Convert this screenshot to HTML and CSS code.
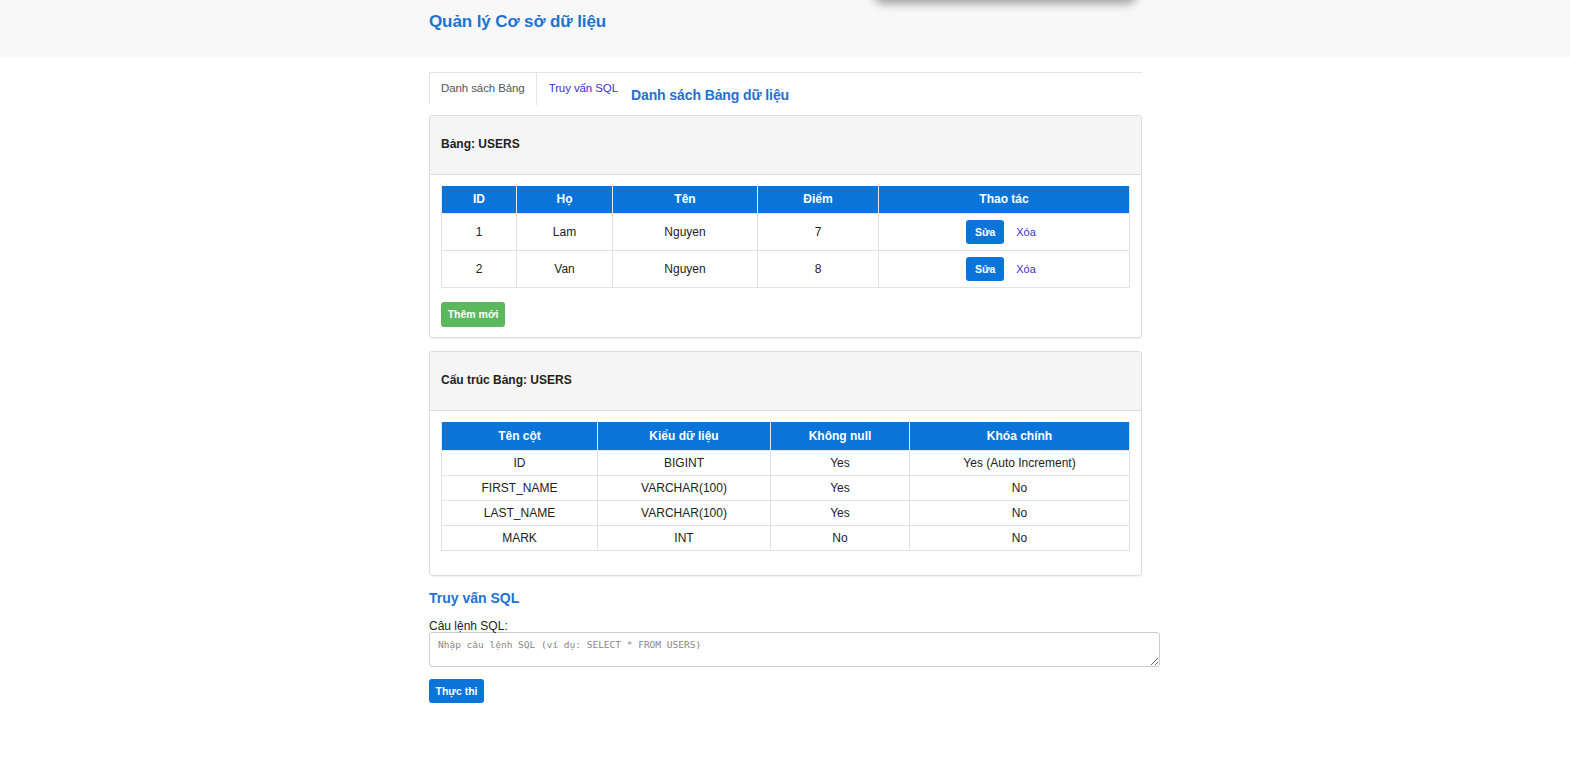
FILE: index.html
```html
<!DOCTYPE html>
<html lang="vi">
<head>
<meta charset="utf-8">
<title>Quản lý Cơ sở dữ liệu</title>
<link rel="stylesheet" href="styles.css">
</head>
<body>
<header class="topbar">
  <div class="container">
    <h1 class="brand">Quản lý Cơ sở dữ liệu</h1>
  </div>
  <div class="ghost-shadow"></div>
</header>
<main class="container">
  <div class="tabs">
    <span class="tab active">Danh sách Bảng</span>
    <a class="tab link" href="#sql">Truy vấn SQL</a>
    <h2 class="tab-title">Danh sách Bảng dữ liệu</h2>
  </div>

  <section class="panel">
    <div class="panel-head">Bảng: USERS</div>
    <div class="panel-body">
      <table class="grid data">
        <colgroup>
          <col style="width:75px"><col style="width:96px"><col style="width:145px"><col style="width:121px"><col>
        </colgroup>
        <thead>
          <tr><th>ID</th><th>Họ</th><th>Tên</th><th>Điểm</th><th>Thao tác</th></tr>
        </thead>
        <tbody>
          <tr><td>1</td><td>Lam</td><td>Nguyen</td><td>7</td><td class="actions"><button class="btn btn-blue">Sửa</button><a class="del" href="#">Xóa</a></td></tr>
          <tr><td>2</td><td>Van</td><td>Nguyen</td><td>8</td><td class="actions"><button class="btn btn-blue">Sửa</button><a class="del" href="#">Xóa</a></td></tr>
        </tbody>
      </table>
      <button class="btn btn-green">Thêm mới</button>
    </div>
  </section>

  <section class="panel">
    <div class="panel-head">Cấu trúc Bảng: USERS</div>
    <div class="panel-body pb-wide">
      <table class="grid struct">
        <colgroup>
          <col style="width:156px"><col style="width:173px"><col style="width:139px"><col>
        </colgroup>
        <thead>
          <tr><th>Tên cột</th><th>Kiểu dữ liệu</th><th>Không null</th><th>Khóa chính</th></tr>
        </thead>
        <tbody>
          <tr><td>ID</td><td>BIGINT</td><td>Yes</td><td>Yes (Auto Increment)</td></tr>
          <tr><td>FIRST_NAME</td><td>VARCHAR(100)</td><td>Yes</td><td>No</td></tr>
          <tr><td>LAST_NAME</td><td>VARCHAR(100)</td><td>Yes</td><td>No</td></tr>
          <tr><td>MARK</td><td>INT</td><td>No</td><td>No</td></tr>
        </tbody>
      </table>
    </div>
  </section>

  <section class="sql" id="sql">
    <h2 class="sql-title">Truy vấn SQL</h2>
    <label class="sql-label" for="q">Câu lệnh SQL:</label>
    <textarea id="q" class="sql-input" placeholder="Nhập câu lệnh SQL (ví dụ: SELECT * FROM USERS)"></textarea>
    <button class="btn btn-blue btn-run">Thực thi</button>
  </section>
</main>
</body>
</html>
```

FILE: styles.css
```css
* { box-sizing: border-box; }
html, body { margin: 0; padding: 0; }
body {
  font-family: "Liberation Sans", Arial, sans-serif;
  color: #222;
  background: #fff;
  font-size: 12px;
}
.container {
  width: 713px;
  margin-left: 429px;
}
.topbar {
  position: relative;
  background: #f8f8f8;
  height: 57px;
  overflow: hidden;
}
.brand {
  margin: 0;
  padding-top: 11px;
  font-size: 17px;
  font-weight: bold;
  color: #1e72d0;
  line-height: 22px;
  letter-spacing: -0.1px;
}
.ghost-shadow {
  position: absolute;
  left: 873px;
  top: -30px;
  width: 265px;
  height: 30px;
  background: #f8f8f8;
  border-radius: 12px;
  box-shadow: 0 4px 10px rgba(0,0,0,0.35);
}
.tabs {
  margin-top: 15px;
  border-top: 1px solid #e4e4e4;
  display: flex;
  align-items: flex-start;
  height: 33px;
}
.tab {
  font-size: 11.5px;
  line-height: 14px;
  padding: 8px 12px 10px 12px;
  text-decoration: none;
  letter-spacing: -0.1px;
}
.tab.active {
  color: #555;
  border-left: 1px solid #e4e4e4;
  border-right: 1px solid #e4e4e4;
  height: 32px;
  padding-left: 11px;
  padding-right: 11px;
}
.tab.link {
  color: #3b2fcf;
  padding-right: 13px;
}
.tab-title {
  margin: 0;
  padding-top: 14px;
  font-size: 14px;
  line-height: 16px;
  font-weight: bold;
  color: #1e72d0;
  letter-spacing: -0.1px;
}
.panel {
  margin-top: 10px;
  border: 1px solid #ddd;
  border-radius: 3px;
  box-shadow: 0 1px 2px rgba(0,0,0,0.06);
}
.panel + .panel { margin-top: 13px; }
.panel-head {
  background: #f5f5f5;
  border-bottom: 1px solid #ddd;
  height: 59px;
  padding: 21px 11px 0;
  font-weight: bold;
  font-size: 12px;
  line-height: 15px;
  color: #222;
}
.panel-body {
  padding: 11px 11px 10px;
}
.pb-wide { padding-bottom: 24px; }
.grid {
  width: 100%;
  border-collapse: collapse;
  table-layout: fixed;
  font-size: 12px;
}
.grid th {
  background: #0b74d8;
  color: #fff;
  font-weight: bold;
  height: 27px;
  border: 1px solid #e6e6e6;
  border-top: 0;
  padding: 0;
}
.grid td {
  border: 1px solid #e2e2e2;
  text-align: center;
  padding: 0;
  color: #222;
}
.data td { height: 37px; }
.data td.actions { padding-right: 6px; }
.struct th { height: 29px; }
.struct td { height: 25px; }
.btn {
  font-family: "Liberation Sans", Arial, sans-serif;
  border: 0;
  border-radius: 3px;
  color: #fff;
  font-size: 10.5px;
  font-weight: bold;
  cursor: pointer;
}
.btn-blue { background: #0b74d8; }
.data .btn-blue {
  width: 38px;
  height: 24px;
  padding: 0;
  vertical-align: middle;
}
.del {
  color: #3b2fcf;
  text-decoration: none;
  margin-left: 12px;
  font-size: 11px;
  vertical-align: middle;
}
.btn-green {
  margin-top: 14px;
  background: #5cb85c;
  width: 64px;
  height: 25px;
  padding: 0;
  display: block;
}
.sql-title {
  margin: 14px 0 0;
  font-size: 14px;
  line-height: 16px;
  font-weight: bold;
  color: #1e72d0;
}
.sql-label {
  display: block;
  margin-top: 14px;
  font-size: 12px;
  line-height: 12px;
  color: #222;
}
.sql-input {
  display: block;
  width: 731px;
  height: 35px;
  margin-top: 0;
  padding: 6px 8px;
  border: 1px solid #ccc;
  border-radius: 3px;
  font-family: "DejaVu Sans Mono", monospace;
  font-size: 9.5px;
  resize: vertical;
}
.sql-input::placeholder { color: #888; }
.btn-run {
  display: block;
  margin-top: 12px;
  width: 55px;
  height: 24px;
  padding: 0;
}
```
